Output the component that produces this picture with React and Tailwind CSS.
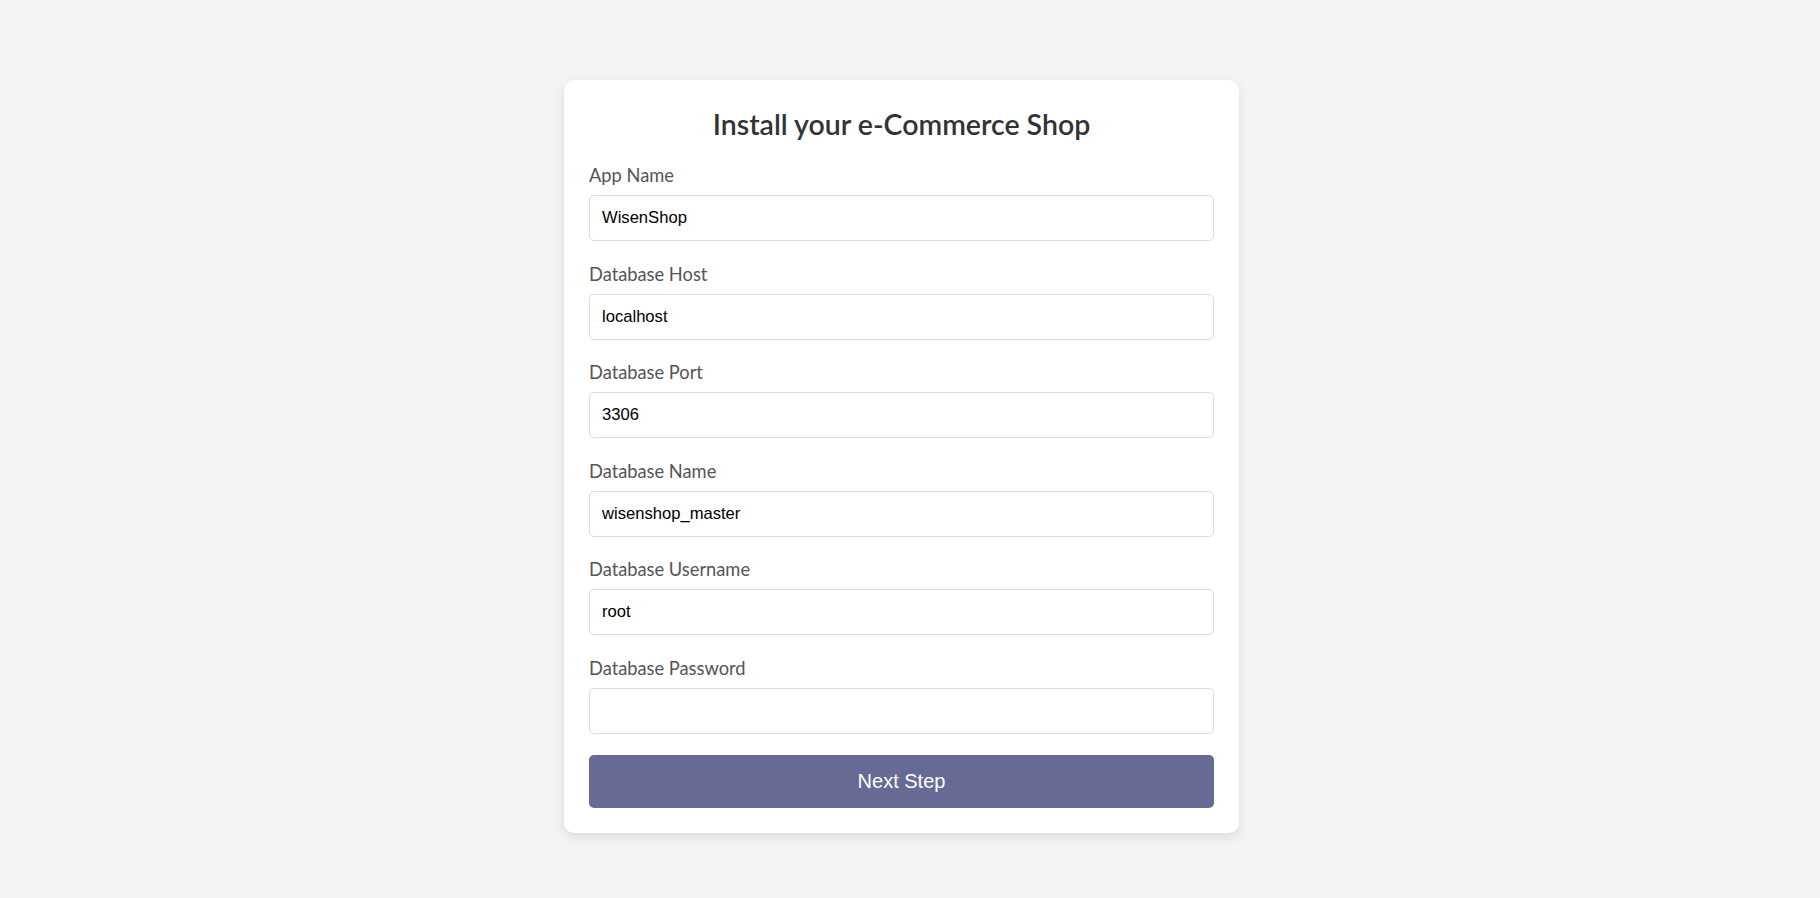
import { useState } from 'react';

export default function App() {
  const [form, setForm] = useState({
    appName: 'WisenShop',
    dbHost: 'localhost',
    dbPort: '3306',
    dbName: 'wisenshop_master',
    dbUser: 'root',
    dbPass: '',
  });

  const fields = [
    { key: 'appName', label: 'App Name', type: 'text' },
    { key: 'dbHost', label: 'Database Host', type: 'text' },
    { key: 'dbPort', label: 'Database Port', type: 'text' },
    { key: 'dbName', label: 'Database Name', type: 'text' },
    { key: 'dbUser', label: 'Database Username', type: 'text' },
    { key: 'dbPass', label: 'Database Password', type: 'password' },
  ];

  const handleChange = (key) => (e) => setForm({ ...form, [key]: e.target.value });

  return (
    <div className="min-h-screen w-full bg-[#f3f4f6] flex justify-center pt-[80px] pr-[17px] font-['Lato',sans-serif]">
      <form
        onSubmit={(e) => e.preventDefault()}
        className="w-[675px] h-fit bg-white rounded-[10px] p-[25px] shadow-[0_4px_12px_rgba(0,0,0,0.1)]"
      >
        <h1 className="text-center text-[28.5px] leading-[34px] font-semibold text-[#333] pt-[2px] mb-[22px]">
          Install your e-Commerce Shop
        </h1>

        {fields.map((f) => (
          <div key={f.key} className="mb-[20.6px]">
            <label htmlFor={f.key} className="block text-[18.3px] leading-[25px] text-[#555] mb-[7px]">
              {f.label}
            </label>
            <input
              id={f.key}
              type={f.type}
              value={form[f.key]}
              onChange={handleChange(f.key)}
              className="block w-full h-[46px] px-[12px] border border-[#ddd] rounded-[5px] text-[16.6px] text-black font-['Liberation_Sans',Arial,sans-serif] outline-none"
            />
          </div>
        ))}

        <button
          type="submit"
          className="block w-full h-[53px] mt-[1px] border-0 bg-[#676a95] text-white text-[20px] rounded-[5px] font-['Liberation_Sans',Arial,sans-serif]"
        >
          Next Step
        </button>
      </form>
    </div>
  );
}
